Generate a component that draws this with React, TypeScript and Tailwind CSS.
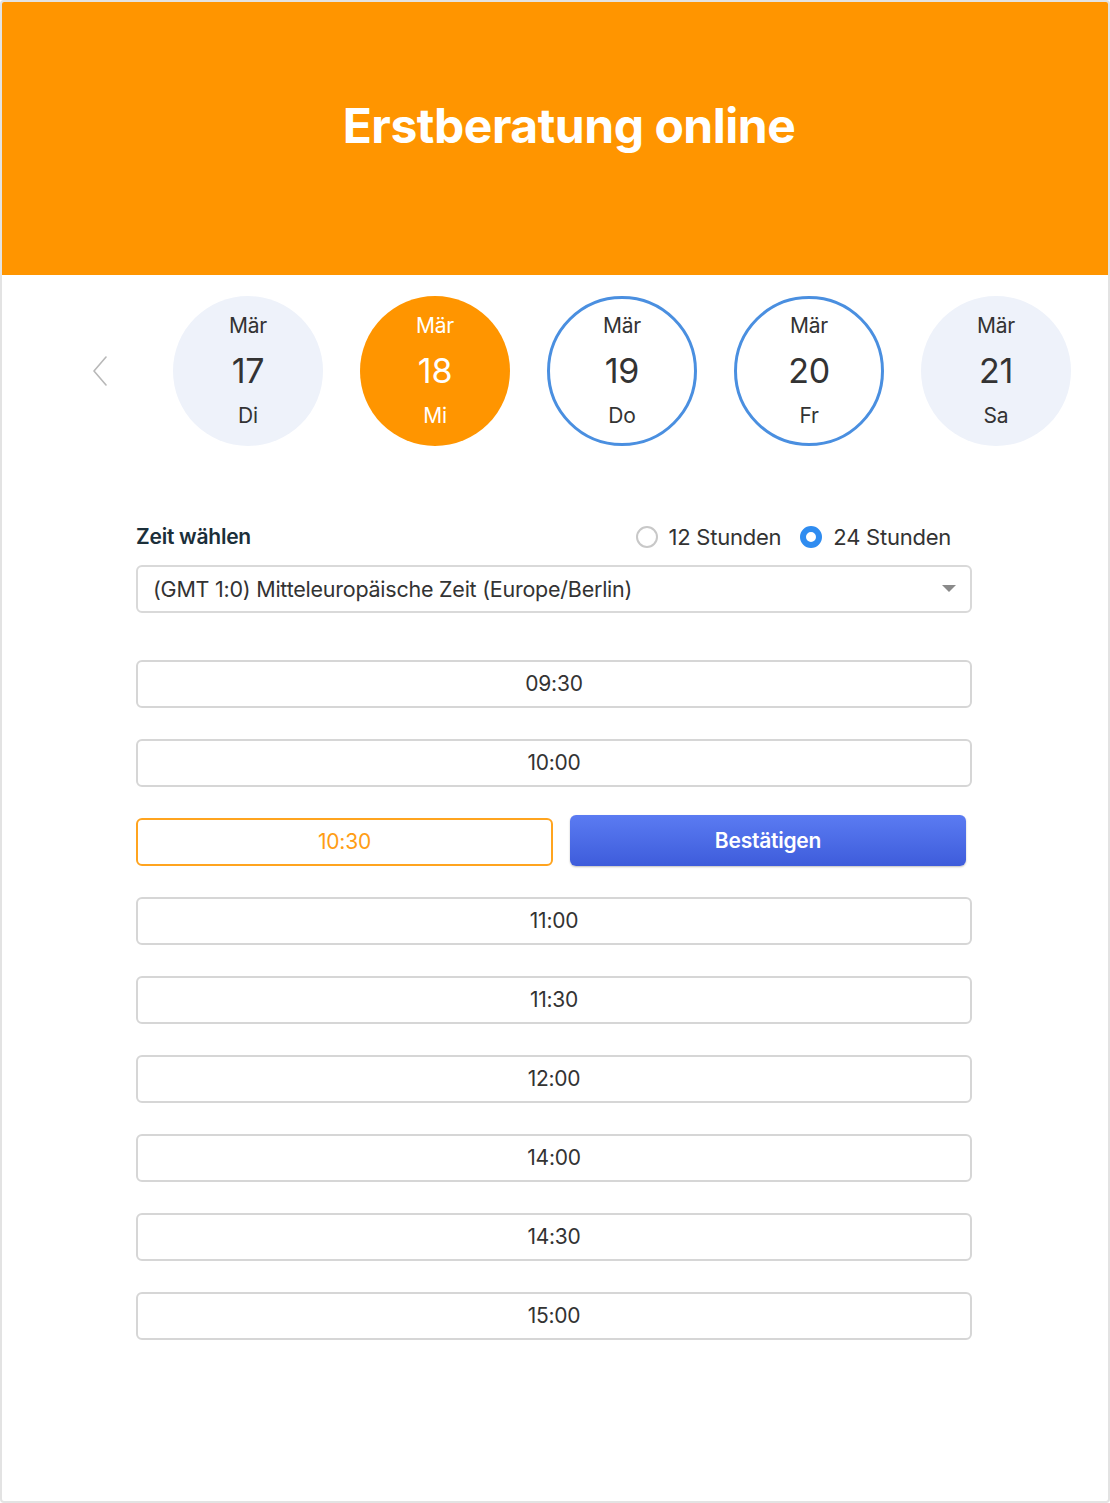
import React, { useState } from 'react';

type Day = { month: string; num: string; wd: string; kind: 'off' | 'active' | 'open' };

const days: Day[] = [
    { month: 'Mär', num: '17', wd: 'Di', kind: 'off' },
    { month: 'Mär', num: '18', wd: 'Mi', kind: 'active' },
    { month: 'Mär', num: '19', wd: 'Do', kind: 'open' },
    { month: 'Mär', num: '20', wd: 'Fr', kind: 'open' },
    { month: 'Mär', num: '21', wd: 'Sa', kind: 'off' },
];

const slots = ['09:30', '10:00', '10:30', '11:00', '11:30', '12:00', '14:00', '14:30', '15:00'];

const dayStyles = (kind: Day['kind']) => {
    switch (kind) {
        case 'active':
            return 'bg-[#ff9500] text-white';
        case 'open':
            return 'bg-white border-[3px] border-[#4a8fe0] text-[#333]';
        default:
            return 'bg-[#eef2fa] text-[#333]';
    }
};

const App: React.FC = () => {
    const [format, setFormat] = useState<'12' | '24'>('24');
    const selected = '10:30';

    return (
        <div className="w-[1110px] h-[1503px] bg-white font-['Inter',sans-serif] tracking-[-0.015em]">
            <div className="h-full flex flex-col border-2 border-[#e3e3e3] rounded-[4px] overflow-hidden">
                {/* Header */}
                <div className="h-[273px] shrink-0 bg-[#ff9500] flex items-center justify-center pb-[26px] pl-[28px]">
                    <h1 className="text-white font-bold text-[48px] tracking-[-0.01em]">Erstberatung online</h1>
                </div>

                {/* Date picker */}
                <div className="flex items-center mt-[21px] ml-[86px]">
                    <button className="w-6 h-10 flex items-center justify-center mr-[61px]">
                        <svg width="16" height="30" viewBox="0 0 16 30" fill="none">
                            <path d="M14 1 L2 15 L14 29" stroke="#b8b8b8" strokeWidth="1.6" strokeLinecap="round" strokeLinejoin="round" />
                        </svg>
                    </button>
                    <div className="flex gap-[37px]">
                        {days.map((d) => (
                            <div
                                key={d.num}
                                className={`w-[150px] h-[150px] rounded-full flex flex-col items-center justify-center gap-[12px] ${dayStyles(d.kind)}`}
                            >
                                <span className="text-[21px] leading-[26px]">{d.month}</span>
                                <span className="text-[34px] leading-[40px]">{d.num}</span>
                                <span className="text-[21px] leading-[26px]">{d.wd}</span>
                            </div>
                        ))}
                    </div>
                </div>

                {/* Time selection */}
                <div className="w-[836px] ml-[134px] mt-[75px]">
                    <div className="flex items-center justify-between h-[32px]">
                        <span className="text-[21px] font-semibold text-[#1b2f3a]">Zeit wählen</span>
                        <div className="flex items-center gap-[19px] mr-[21px] text-[22px] text-[#333]">
                            <label className="flex items-center gap-[11px] cursor-pointer" onClick={() => setFormat('12')}>
                                <span
                                    className={`w-[22px] h-[22px] rounded-full ${format === '12' ? 'border-[6px] border-[#2f8cf0]' : 'border-2 border-[#c8c8c8]'}`}
                                />
                                12 Stunden
                            </label>
                            <label className="flex items-center gap-[11px] cursor-pointer" onClick={() => setFormat('24')}>
                                <span
                                    className={`w-[22px] h-[22px] rounded-full ${format === '24' ? 'border-[6px] border-[#2f8cf0]' : 'border-2 border-[#c8c8c8]'}`}
                                />
                                24 Stunden
                            </label>
                        </div>
                    </div>

                    <div className="mt-[12px] h-[48px] border-2 border-[#d9d9d9] rounded-[6px] flex items-center justify-between pl-[15px] pr-[14px] text-[21.5px] text-[#333]">
                        <span>(GMT 1:0) Mitteleuropäische Zeit (Europe/Berlin)</span>
                        <svg width="14" height="8" viewBox="0 0 14 8">
                            <path d="M0 0 L14 0 L7 7 Z" fill="#8a8a8a" />
                        </svg>
                    </div>

                    <div className="mt-[47px] flex flex-col gap-[31px]">
                        {slots.map((s) =>
                            s === selected ? (
                                <div key={s} className="flex items-end gap-[17px] h-[48px]">
                                    <div className="w-[417px] h-[48px] border-2 border-[#ffa41f] rounded-[6px] flex items-center justify-center text-[21px] text-[#ff9d14]">
                                        {s}
                                    </div>
                                    <button className="w-[396px] h-[51px] rounded-[6px] bg-gradient-to-b from-[#5b7bf2] to-[#3e5cdb] text-white font-semibold text-[21px] shadow-[0_1px_2px_rgba(0,0,0,0.25)]">
                                        Bestätigen
                                    </button>
                                </div>
                            ) : (
                                <div
                                    key={s}
                                    className="h-[48px] border-2 border-[#d6d6d6] rounded-[6px] flex items-center justify-center text-[21px] text-[#333]"
                                >
                                    {s}
                                </div>
                            )
                        )}
                    </div>
                </div>
            </div>
        </div>
    );
};

export default App;
